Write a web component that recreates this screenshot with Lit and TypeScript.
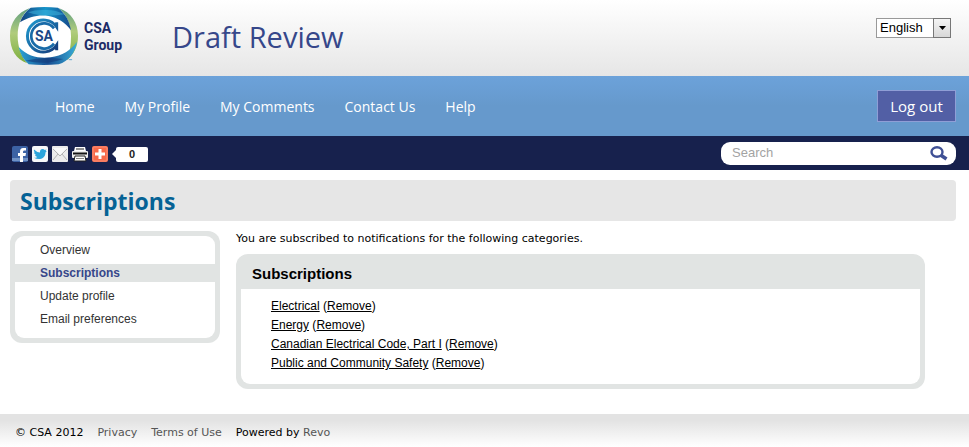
import { LitElement, html, css, svg } from "lit";
import { customElement, property } from "lit/decorators.js";
import { classMap } from "lit/directives/class-map.js";

@customElement("csa-logo")
class CsaLogo extends LitElement {
  static styles = css`
    :host { display: block; }
    .logo { display: flex; align-items: center; gap: 6px; color: #1d2b66; text-decoration: none; }
    .mark { display: block; width: 68px; height: 58px; }
    .name { display: grid; padding-top: 1px; font: bold 14px/17px Roboto, "Liberation Sans", sans-serif; }
    .letters { font: bold 42px Roboto, "Liberation Sans", sans-serif; fill: #1a4787; }
    .tm { font: bold 12px "Liberation Sans", sans-serif; fill: #1a86c0; }
  `;
  render() {
    return html`<a class="logo" href="#">
      <svg class="mark" viewBox="30 20 204 174" aria-hidden="true">
        <defs>
          <linearGradient id="blue" x1="0" x2="1">
            <stop offset="0" stop-color="#14417f" /><stop offset=".5" stop-color="#1593c8" /><stop offset="1" stop-color="#154a8c" />
          </linearGradient>
          <linearGradient id="low" x1="0" x2="1">
            <stop offset="0" stop-color="#2aa5d5" /><stop offset=".5" stop-color="#174d91" /><stop offset="1" stop-color="#39afd9" />
          </linearGradient>
          <linearGradient id="green" x1="0" y1="0" x2="0" y2="1">
            <stop offset="0" stop-color="#5f9e80" /><stop offset=".45" stop-color="#b0cc7c" /><stop offset="1" stop-color="#7cae3c" />
          </linearGradient>
          <linearGradient id="ring" x1="0" y1="0" x2="1" y2="1">
            <stop offset="0" stop-color="#209bd0" /><stop offset="1" stop-color="#153b7b" />
          </linearGradient>
        </defs>
        <ellipse cx="132" cy="107" rx="90" ry="80" fill="#fff" />
        <path d="M90 23C52 36 30 66 30 106C30 148 48 176 82 189C64 168 53 140 53 106C53 70 66 42 90 23Z" fill="url(#green)" />
        <path d="M176 23C214 36 234 68 234 106C234 138 222 162 200 180C209 160 213 136 213 108C213 72 200 43 176 23Z" fill="url(#green)" />
        <path d="M92 22Q134 18 174 22C196 40 208 60 213 90C196 66 172 52 146 47C116 42 86 50 60 66C66 48 77 33 92 22Z" fill="url(#blue)" />
        <path d="M84 36Q128 52 194 42Q165 28 137 29Q108 27 84 36Z" fill="#46bfe4" opacity=".45" />
        <path d="M56 140C84 170 120 175 152 171C186 166 213 150 231 124C226 158 206 182 176 192Q130 196 86 192C70 178 60 160 56 140Z" fill="url(#low)" />
        <path d="M76 181Q126 168 190 176Q166 185 143 187Q108 189 76 181Z" fill="#123b7a" opacity=".6" />
        <path d="M170 66V80A48 48 0 1 0 170 134V150" fill="none" stroke="url(#ring)" stroke-width="9" />
        <path d="M162 84A38 38 0 1 0 162 130" fill="none" stroke="#196ba8" stroke-width="8" />
        <text class="letters" x="105" y="122">SA</text>
        <text class="tm" x="205" y="186">™</text>
      </svg>
      <span class="name"><span>CSA</span><span>Group</span></span>
    </a>`;
  }
}

@customElement("share-bar")
class ShareBar extends LitElement {
  @property({ type: Number }) count = 0;
  static styles = css`
    :host { display: flex; align-items: center; gap: 4px; }
    .share { display: block; width: 16px; height: 16px; padding: 0; border: 0; background: none; cursor: pointer; }
    .icon { display: block; width: 16px; height: 16px; }
    .bubble { display: flex; align-items: center; }
    .tip { width: 0; height: 0; border: 4px solid transparent; border-left: 0; border-right-color: #fff; }
    .count { width: 32px; border-radius: 2px; background: #fff; color: #222; text-align: center; font: bold 11px/15px "Liberation Sans", sans-serif; }
  `;
  private icons = [
    { label: "Facebook", art: svg`<rect width="16" height="16" rx="2" fill="#3c62a4"/><rect y="12" width="16" height="3" fill="#6f91c5"/><path d="M8 16V10H6V7H8V5.500Q8 2 11 2H14V4.500H12Q11 4.500 11 6V7H14L13.500 10H11V16Z" fill="#fff"/>` },
    { label: "Twitter", art: svg`<rect width="16" height="16" rx="2" fill="#f7f8f9"/><path d="M2 3.500Q5 6.500 8 6.500Q7.700 3.200 10.600 3Q12 3 12.700 4L14.500 3.400L13.600 5L14.800 4.900L13.500 6.400C13.500 11 10 13 7 13Q4 13 2 11.800Q4.300 11.800 5.300 10.900Q3.400 10.500 3 9H4Q2 8 2 6.300L3 6.600Q1.300 5 2 3.500Z" fill="#2ca5dc"/>` },
    { label: "Email", art: svg`<rect width="16" height="16" rx="1" fill="#ececec"/><path d="M1 3L8 10L15 3M1 14L6 8M15 14L10 8" fill="none" stroke="#b4b4b4"/><path d="M1 2H15L8 9Z" fill="#fafafa"/>` },
    { label: "Print", art: svg`<path d="M3 1H13L14 5H2Z" fill="#fff"/><path d="M4 3H12" stroke="#222"/><rect y="5" width="16" height="7" rx="1" fill="#eee"/><path d="M1 7.500H15" stroke="#151515" stroke-width="2"/><path d="M3 10H13L14 15H2Z" fill="#fff" stroke="#222"/><path d="M4 12.500H12" stroke="#888"/>` },
    { label: "More", art: svg`<rect width="16" height="16" rx="2" fill="#f9694a"/><rect x="1" y="1" width="14" height="14" rx="1" fill="none" stroke="#fb9179"/><path d="M8 3V13M3 8H13" stroke="#fff" stroke-width="3"/>` },
  ];
  render() {
    return html`${this.icons.map(i => html`<button class="share" type="button" aria-label=${i.label}>
      <svg class="icon" viewBox="0 0 16 16" aria-hidden="true">${i.art}</svg></button>`)}
      <div class="bubble"><span class="tip"></span><span class="count">${this.count}</span></div>`;
  }
}

@customElement("app-root")
class AppRoot extends LitElement {
  static styles = css`
    :host { display: block; min-height: 100vh; background: #fff; color: #000; font: 12px/19px "Liberation Sans", Arial, sans-serif; }
    * { box-sizing: border-box; }
    ul { margin: 0; padding: 0; list-style: none; }
    .header { display: flex; align-items: flex-start; height: 76px; padding: 7px 18px 0 10px; background: linear-gradient(#fff, #e6e6e6); }
    .app-name { flex: 1; margin: 8px 0 0 50px; color: #36478a; font: 29px/44px "Open Sans", "Noto Sans", sans-serif; }
    .language { display: grid; grid-template-columns: 1fr 18px; width: 75px; height: 20px; margin-top: 11px; }
    .language-select { grid-area: 1 / 1 / 2 / 3; appearance: none; padding: 0 0 0 3px; border: 1px solid #999; border-radius: 0; background: #fff; color: #000; font: 13px/16px "Liberation Sans", sans-serif; }
    .arrow { grid-area: 1 / 2; display: grid; place-items: center; z-index: 1; border: 1px solid #777; background: linear-gradient(#f4f4f4, #d8d8d8); pointer-events: none; }
    .arrow-icon { width: 7px; height: 4px; }
    .nav { display: flex; align-items: center; justify-content: space-between; height: 60px; padding: 0 13px 0 55px; background: linear-gradient(#6ca2da, #6699cc 50%); font: 14px/20px "Open Sans", "Noto Sans", sans-serif; }
    .nav-list { display: flex; gap: 30px; padding-top: 2px; }
    .nav-link { color: #fff; text-decoration: none; }
    .logout { width: 79px; height: 32px; padding: 0; border: 1px solid #8f9ed6; background: #525fa5; color: #fff; font: 15px/20px "Open Sans", "Noto Sans", sans-serif; }
    .tools { display: flex; align-items: center; justify-content: space-between; height: 34px; padding: 0 13px 0 12px; background: #17214d; }
    .tools-share { margin-top: 2px; }
    .search { display: flex; align-items: center; width: 235px; height: 23px; padding: 0 8px 0 11px; border-radius: 9px; background: #fff; }
    .search-input { flex: 1; min-width: 0; padding: 0; border: 0; outline: 0; background: none; font: 13px/20px "Liberation Sans", sans-serif; }
    .search-input::placeholder { color: #a3a3a3; opacity: 1; }
    .search-button { padding: 0; border: 0; background: none; }
    .search-icon { display: block; width: 18px; height: 16px; }
    .title { margin: 10px 13px 10px 10px; padding: 1px 10px 0; border-radius: 4px; background: #e6e6e6; color: #056295; font: bold 23px/40px "Open Sans", "Noto Sans", sans-serif; }
    .columns { display: flex; align-items: flex-start; gap: 16px; padding: 0 44px 0 10px; }
    .side { width: 210px; padding: 5px; border-radius: 12px; background: #e1e4e3; }
    .side-list { display: grid; gap: 5px; padding: 5px 0 10px; border-radius: 9px; background: #fff; }
    .side-link { display: block; padding: 1px 0 0 25px; color: #333; line-height: 17px; text-decoration: none; }
    .side-link.current { background: #e1e4e3; color: #36478a; font-weight: bold; }
    .main { flex: 1; min-width: 0; }
    .intro { margin: 0 0 7px; font: 11px/16px "DejaVu Sans", Verdana, sans-serif; }
    .panel { padding: 0 5px 5px; border-radius: 12px; background: #e1e4e3; }
    .panel-title { margin: 0; padding: 4px 11px 0; font: bold 15px/31px "Liberation Sans", sans-serif; }
    .panel-list { padding: 8px 30px 11px; border-radius: 0 0 9px 9px; background: #fff; }
    .panel-link { color: #000; }
    .footer { display: flex; gap: 14px; margin-top: 25px; padding: 9px 15px 5px; background: linear-gradient(#e3e3e3 20%, #fff); font: 11px/19px "DejaVu Sans", Verdana, sans-serif; }
    .footer-link { color: #555; text-decoration: none; }
  `;
  private nav = ["Home", "My Profile", "My Comments", "Contact Us", "Help"];
  private side = ["Overview", "Subscriptions", "Update profile", "Email preferences"];
  private categories = ["Electrical", "Energy", "Canadian Electrical Code, Part I", "Public and Community Safety"];

  render() {
    return html`
      <header class="header">
        <csa-logo></csa-logo>
        <div class="app-name">Draft Review</div>
        <div class="language">
          <select class="language-select" aria-label="Language"><option>English</option></select>
          <span class="arrow"><svg class="arrow-icon" viewBox="0 0 7 4" aria-hidden="true"><path d="M0 0H7L3.500 4Z" /></svg></span>
        </div>
      </header>
      <nav class="nav">
        <ul class="nav-list">${this.nav.map(n => html`<li><a class="nav-link" href="#">${n}</a></li>`)}</ul>
        <button class="logout" type="button">Log out</button>
      </nav>
      <div class="tools">
        <share-bar class="tools-share" .count=${0}></share-bar>
        <form class="search" role="search">
          <input class="search-input" type="text" placeholder="Search" aria-label="Search" />
          <button class="search-button" type="button" aria-label="Go">
            <svg class="search-icon" viewBox="0 0 18 16" aria-hidden="true"><ellipse cx="7" cy="7" rx="5.500" ry="4.700" fill="none" stroke="#3f5095" stroke-width="2.400" /><path d="M10.500 10L16.500 14" stroke="#3f5095" stroke-width="3.500" /></svg>
          </button>
        </form>
      </div>
      <h1 class="title">Subscriptions</h1>
      <div class="columns">
        <nav class="side" aria-label="Account"><ul class="side-list">
          ${this.side.map(s => html`<li><a class=${classMap({ "side-link": true, current: s === "Subscriptions" })} href="#">${s}</a></li>`)}
        </ul></nav>
        <main class="main">
          <p class="intro">You are subscribed to notifications for the following categories.</p>
          <section class="panel">
            <h2 class="panel-title">Subscriptions</h2>
            <ul class="panel-list">
              ${this.categories.map(c => html`<li><a class="panel-link" href="#">${c}</a> (<a class="panel-link" href="#">Remove</a>)</li>`)}
            </ul>
          </section>
        </main>
      </div>
      <footer class="footer">
        <span>© CSA 2012</span><a class="footer-link" href="#">Privacy</a><a class="footer-link" href="#">Terms of Use</a>
        <span>Powered by <a class="footer-link" href="#">Revo</a></span>
      </footer>`;
  }
}
